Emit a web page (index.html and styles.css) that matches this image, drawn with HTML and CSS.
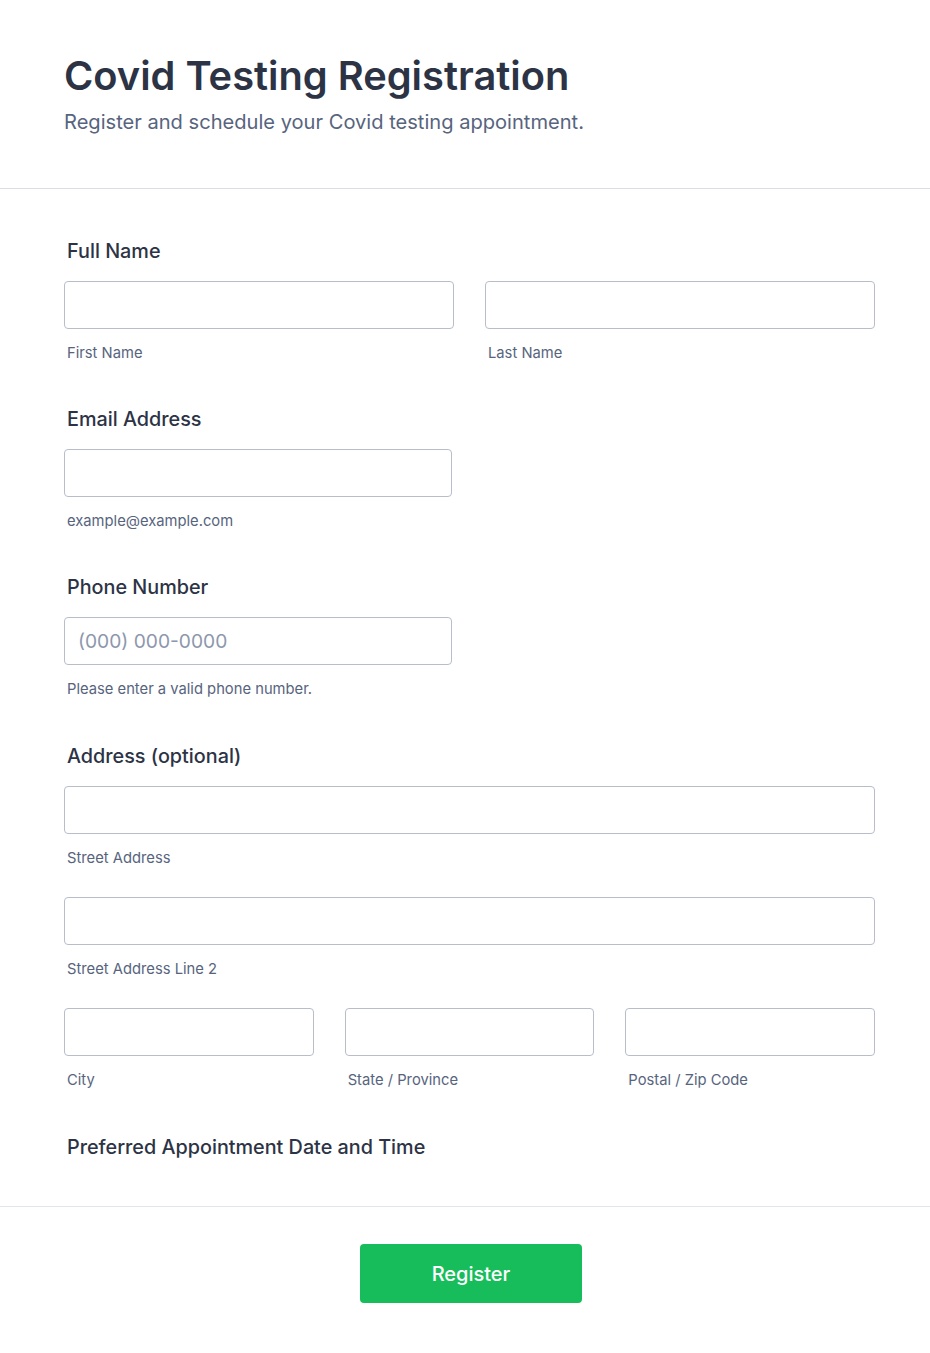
FILE: index.html
```html
<!DOCTYPE html>
<html lang="en">
<head>
<meta charset="utf-8">
<title>Covid Testing Registration</title>
<link rel="stylesheet" href="styles.css">
</head>
<body>
<header class="form-header">
  <h1 class="title">Covid Testing Registration</h1>
  <p class="subtitle">Register and schedule your Covid testing appointment.</p>
</header>
<main class="form-body">
  <section class="field">
    <div class="label">Full Name</div>
    <div class="row two">
      <div class="col"><div class="input"></div><div class="sublabel">First Name</div></div>
      <div class="col"><div class="input"></div><div class="sublabel">Last Name</div></div>
    </div>
  </section>
  <section class="field tight">
    <div class="label">Email Address</div>
    <div class="narrow"><div class="input"></div><div class="sublabel">example@example.com</div></div>
  </section>
  <section class="field tight">
    <div class="label">Phone Number</div>
    <div class="narrow"><div class="input"><span class="placeholder">(000) 000-0000</span></div><div class="sublabel">Please enter a valid phone number.</div></div>
  </section>
  <section class="field">
    <div class="label">Address (optional)</div>
    <div class="stack">
      <div><div class="input"></div><div class="sublabel">Street Address</div></div>
      <div><div class="input"></div><div class="sublabel">Street Address Line 2</div></div>
      <div class="row three">
        <div class="col"><div class="input"></div><div class="sublabel">City</div></div>
        <div class="col"><div class="input"></div><div class="sublabel">State / Province</div></div>
        <div class="col"><div class="input"></div><div class="sublabel">Postal / Zip Code</div></div>
      </div>
    </div>
  </section>
  <section class="field last">
    <div class="label">Preferred Appointment Date and Time</div>
  </section>
</main>
<footer class="form-footer">
  <button class="submit" type="button">Register</button>
</footer>
</body>
</html>
```

FILE: styles.css
```css
* { box-sizing: border-box; }
html, body { margin: 0; padding: 0; background: #ffffff; }
body {
  font-family: Inter, "Noto Sans", "Liberation Sans", sans-serif;
  color: #2c3345;
  width: 930px;
}
.form-header {
  height: 189px;
  padding: 52px 55px 0 64px;
  border-bottom: 1px solid #dcdde6;
}
.title {
  margin: 0;
  font-size: 39.8px;
  line-height: 48px;
  font-weight: 600;
  color: #2c3345;
}
.subtitle {
  margin: 10px 0 0 0;
  font-size: 20.1px;
  line-height: 24px;
  color: #57647e;
}
.form-body {
  padding: 50px 55px 47px 64px;
  border-bottom: 1px solid #e3e5ec;
  display: flex;
  flex-direction: column;
  gap: 45px;
}
.field.tight { margin-top: -1px; }
.label {
  font-size: 19.8px;
  line-height: 24px;
  font-weight: 500;
  padding-left: 3px;
  margin-bottom: 18px;
}
.field.last .label { margin-bottom: 0; }
.row { display: grid; gap: 31px; }
.row.two { grid-template-columns: 1fr 1fr; }
.row.three { grid-template-columns: 1fr 1fr 1fr; }
.narrow { width: 388px; }
.stack { display: flex; flex-direction: column; gap: 29px; }
.input {
  height: 48px;
  border: 1px solid #b8bdc9;
  border-radius: 4px;
  background: #fff;
  padding: 0 14px 0 13px;
  display: flex;
  align-items: center;
}
.placeholder {
  font-size: 19.2px;
  color: #8d97ad;
}
.sublabel {
  margin-top: 14px;
  font-size: 14.75px;
  line-height: 20px;
  color: #57647e;
  padding-left: 3px;
}
.form-footer {
  display: flex;
  justify-content: center;
  padding: 37px 0 50px 0;
}
.submit {
  width: 222px;
  height: 59px;
  margin-left: 12px;
  border: none;
  border-radius: 4px;
  background: #18bd5b;
  color: #ffffff;
  font-family: Inter, "Noto Sans", "Liberation Sans", sans-serif;
  font-size: 20px;
  font-weight: 500;
}
```
